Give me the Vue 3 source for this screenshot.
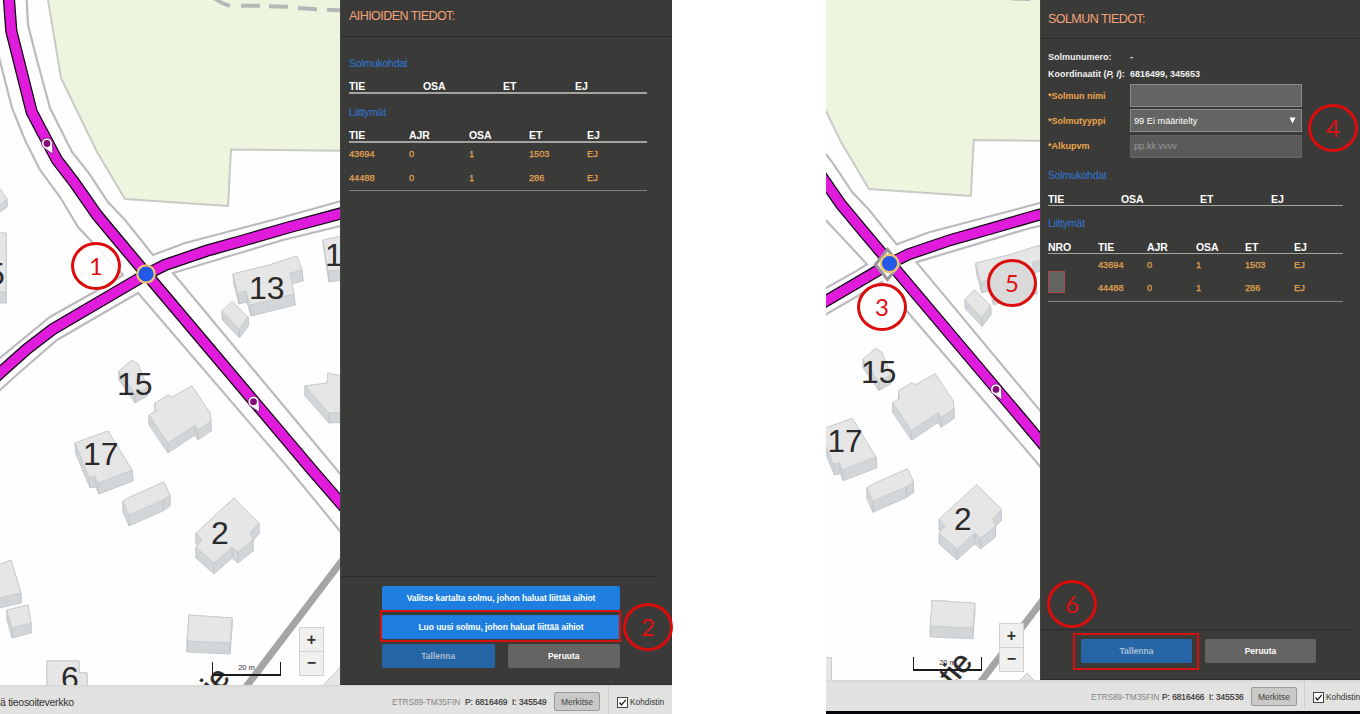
<script setup>
const buildings = [
  { d: [1, 11], p: [[233, 274], [269, 265], [297, 256], [302, 270], [290, 273], [294, 294], [250, 305], [246, 291], [238, 293]] },
  { d: [0.5, 9], p: [[232, 301], [248, 317], [239, 329], [222, 311]] },
  { d: [0, 9], p: [[132, 360], [138, 364], [147, 387], [135, 394], [119, 371]] },
  { d: [0, 10], p: [[192, 386], [210, 413], [211, 421], [198, 430], [195, 425], [168, 443], [149, 415], [156, 411], [155, 403], [168, 395], [172, 397]] },
  { d: [1, 11], p: [[75, 443], [108, 431], [132, 470], [98, 483], [95, 476], [89, 477]] },
  { d: [0, 11], p: [[123, 501], [130, 497], [164, 482], [170, 495], [163, 500], [129, 515]] },
  { d: [0, 11], p: [[234, 498], [259, 523], [250, 533], [253, 540], [238, 552], [232, 547], [214, 563], [196, 547], [202, 540], [196, 533]] },
  { d: [0, 11], p: [[189, 615], [232, 618], [230, 643], [187, 641]] },
  { d: [0, 10], p: [[-15, 570], [11, 560], [21, 593], [-10, 600]] },
  { d: [0, 10], p: [[7, 610], [28, 605], [31, 623], [12, 628]] },
  { d: [0, 0], p: [[47, 661], [79, 661], [79, 673], [87, 673], [87, 700], [47, 700]] },
  { d: [1, 11], p: [[323, 240], [350, 234], [350, 268], [328, 271]] },
  { d: [0, 10], p: [[305, 386], [327, 383], [328, 373], [350, 378], [350, 412], [329, 413]] },
  { d: [0, 11], p: [[-10, 233], [6, 233], [6, 292], [-10, 292]] },
  { d: [0, 8], p: [[-10, 185], [0, 189], [7, 199], [-5, 208]] },
  { d: [0, 0], p: [[322, 687], [345, 662], [345, 700]] },
  { d: [0, 0], p: [[276, 698], [285, 689], [294, 698]] }
]
const pts = a => a.map(q => q.join(',')).join(' ')
const walls = b => b.p.map((a, i) => {
  const c = b.p[(i + 1) % b.p.length]
  const [dx, dy] = b.d
  return pts([a, c, [c[0] + dx, c[1] + dy], [a[0] + dx, a[1] + dy]])
})
const mainRoad = '9,-12 9,0 11.3,31 31.7,112 57,160 74,182 97,215 117,239 146,273.5 312,470 345,508'
const sideRoad = '-12,384 0,373 27,349 53,329 146,274.5 165,265 207,250.7 245,240 290,227 350,211'
const casings = [
  '26.7,-12 26.7,0 28,25 37,60 50,108 72,152 88,172 108,202 125,220 153,255 185,243 280,218 345,200',
  '-3,48 0,61 12,108 25,140 40,170 60,197 78,227 123,275 112,282 50,317 0,358 -5,362',
  '-5,394 0,390 20,372 57,340 100,315 138,293 290,470 345,537',
  '345,225 283,240 233,255 173,273 337,470 345,480'
]
const labels = [
  ['13', 249, 299], ['15', 117, 395], ['17', 83, 464.5], ['2', 211, 544], ['6', 61, 689], ['11', 325, 266], ['5', -13, 285]
]
const pins = [[47, 143.5], [253.5, 401.7]]
const maps = {
  left: { w: 340, h: 685, t: '' },
  right: { w: 214, h: 680, t: 'translate(-80.6 -7.7) scale(.9886)' }
}
const screens = [
  {
    id: 'left', title: 'AIHIOIDEN TIEDOT:', nro: false,
    crs: 'P: 6816469', east: 'I: 345549', footer: 'ä tieosoiteverkko'
  },
  {
    id: 'right', title: 'SOLMUN TIEDOT:', nro: true,
    crs: 'P: 6816466', east: 'I: 345536', footer: ''
  }
]
const rows = [['43694', '0', '1', '1503', 'EJ'], ['44488', '0', '1', '286', 'EJ']]
</script>

<template>
  <div class="page">
    <section v-for="s in screens" :key="s.id" class="screen" :class="s.id">
      <div class="main">
        <div class="map">
          <svg class="canvas" :width="maps[s.id].w" :height="maps[s.id].h">
            <g :transform="maps[s.id].t">
              <polygon class="field" points="47,-14 48,0 61,78 97,152 125,199 228,206 231,149.500 360,151 360,-14" />
              <g class="dashes">
                <path d="M214,-2 L222,3 L230,6" /><path d="M241,5.700H260" /><path d="M269,6.300L288,6.700" /><path d="M298,8L317,9.200" /><path d="M327,9.700L345,10.500" />
              </g>
              <path class="track" d="M350,550 L230,708" />
              <g v-for="(b, i) in buildings" :key="i">
                <polygon v-for="(w, j) in walls(b)" :key="j" class="wall" :points="w" />
                <polygon class="roof" :points="pts(b.p)" />
              </g>
              <polyline v-for="(c, i) in casings" :key="i" class="casing" :points="c" />
              <text class="street" transform="translate(231 678) rotate(-50)" text-anchor="end">tie</text>
              <text v-for="l in labels" :key="l[0]" class="house" :x="l[1]" :y="l[2]">{{ l[0] }}</text>
              <polyline class="edge" :points="sideRoad" />
              <polyline class="edge" :points="mainRoad" />
              <polyline class="road" :points="sideRoad" />
              <polyline class="road" :points="mainRoad" />
              <g v-for="(p, i) in pins" :key="i" :transform="`translate(${p[0]} ${p[1]})`">
                <path class="pin" d="M-5.500,0 A5.500,5.500 0 1 1 5.500,0 L6,10.500 L-2,5.200 A5.500,5.500 0 0 1 -5.500,0Z" />
                <circle class="dot" r="3.400" />
              </g>
            </g>
            <g v-if="s.id === 'left'">
              <circle class="node" cx="146" cy="274" r="8.700" />
            </g>
            <g v-else>
              <path class="diamond" d="M61.500,249.500 L73.500,264.500 L61.500,279.500 L49.500,264.500Z" />
              <circle class="node" cx="63.500" cy="263.500" r="8.700" />
            </g>
          </svg>
          <div class="scale"><span>20 m</span></div>
          <div class="zoom"><b>+</b><b>−</b></div>
        </div>

        <aside class="panel">
          <header class="title"><span>{{ s.title }}</span></header>
          <div class="body">
            <div v-if="s.nro" class="form">
              <div class="info"><label>Solmunumero:</label><span>-</span></div>
              <div class="info"><label>Koordinaatit (<i>P, I</i>):</label><span>6816499, 345653</span></div>
              <div class="field-row"><label>*Solmun nimi</label><div class="input"></div></div>
              <div class="field-row"><label>*Solmutyyppi</label><div class="input select"><span>99 Ei määritelty</span><svg width="7" height="7"><path d="M.5 .5h6L3.500 6.500z" fill="#fff" /></svg></div></div>
              <div class="field-row"><label>*Alkupvm</label><div class="input off"><span>pp.kk.vvvv</span></div></div>
            </div>
            <h3>Solmukohdat</h3>
            <div class="thead points"><span>TIE</span><span>OSA</span><span>ET</span><span>EJ</span></div>
            <h3 class="second">Liittymät</h3>
            <div class="thead cols"><span v-if="s.nro">NRO</span><span>TIE</span><span>AJR</span><span>OSA</span><span>ET</span><span>EJ</span></div>
            <div class="rows">
              <div v-if="s.nro" class="check"></div>
              <div v-for="r in rows" :key="r[0]" class="cols row"><span v-if="s.nro"></span><span v-for="(c, i) in r" :key="i">{{ c }}</span></div>
            </div>
          </div>
          <footer class="actions">
            <button v-if="!s.nro" class="blue wide">Valitse kartalta solmu, johon haluat liittää aihiot</button>
            <button v-if="!s.nro" class="blue wide">Luo uusi solmu, johon haluat liittää aihiot</button>
            <div class="pair"><button class="save">Tallenna</button><button class="cancel">Peruuta</button></div>
          </footer>
        </aside>
      </div>
      <div class="status">
        <span class="layer">{{ s.footer }}</span>
        <span class="crs">ETRS89-TM35FIN</span>
        <span class="coord">{{ s.crs }}&nbsp; {{ s.east }}</span>
        <button class="mark">Merkitse</button>
        <div class="aim">
          <svg width="11" height="11"><rect x=".5" y=".5" width="10" height="10" fill="#fff" stroke="#444" /><path d="M2.500 5.500L4.500 8L8.800 2.800" fill="none" stroke="#222" stroke-width="1.300" /></svg>
          <span>Kohdistin</span>
        </div>
      </div>
    </section>

    <div class="frame f2"></div>
    <div class="frame f6"></div>
    <div v-for="n in 6" :key="n" class="step" :class="'s' + n">{{ n }}</div>
  </div>
</template>

<style scoped>
* { box-sizing: border-box; }
.page { position: relative; width: 1360px; height: 714px; display: grid; grid-template-columns: 672px 534px; column-gap: 154px; background: #fff; overflow: hidden; font-family: "Liberation Sans", Arial, sans-serif; font-size: 9px; }
.screen { display: flex; flex-direction: column; height: 714px; min-width: 0; }
.right { border-bottom: 3px solid #05060b; }
.main { display: flex; height: 685px; flex: none; }
.right .main { height: 680px; }
.map { position: relative; width: 340px; flex: none; overflow: hidden; background: #fefefe; }
.right .map { width: 214px; }
.canvas { display: block; }
.field { fill: #edf5df; stroke: #c9cac6; stroke-width: 2; }
.dashes path { fill: none; stroke: #b5b8b6; stroke-width: 4; }
.track { stroke: #a5a5a5; stroke-width: 7; }
.wall { fill: #d3d6d8; stroke: #c3c6c8; stroke-width: .9; }
.roof { fill: #e6e6e6; stroke: #cccfd0; stroke-width: 1; }
.casing { fill: none; stroke: #bbbbbf; stroke-width: 2.200; }
.edge { fill: none; stroke: #0c0210; stroke-width: 12.200; }
.road { fill: none; stroke: #e01bdb; stroke-width: 9.700; }
.house, .street { font-size: 32px; fill: #2b2929; }
.street { font-size: 31px; stroke: #2b2929; stroke-width: .5; }
.pin { fill: #fff; stroke: #80107a; stroke-width: .8; }
.dot { fill: #850b7c; }
.node { fill: #2359e8; stroke: #efc66f; stroke-width: 2.200; }
.diamond { fill: #fff; stroke: #999; stroke-width: 3; }
.scale { position: absolute; left: 212px; top: 662px; width: 69px; height: 14px; border: 2px solid #1c1c1c; border-width: 0 1px 2px; text-align: center; font-size: 7.500px; line-height: 11px; color: #333; }
.right .scale { left: 87px; top: 657px; }
.zoom { position: absolute; left: 299px; top: 627px; width: 25px; height: 49px; display: flex; flex-direction: column; background: #f0f0ee; border: 1px solid #d0d0d0; }
.right .zoom { left: 173px; top: 623px; }
.zoom b { flex: 1; text-align: center; font-size: 16px; line-height: 23px; color: #333; }
.zoom b + b { border-top: 1px solid #d0d0d0; line-height: 22px; }
.panel { flex: 1; display: flex; flex-direction: column; background: #3a3a38; border-left: 1px solid #444442; border-bottom: 1px solid #2a2a29; }
.title { height: 37px; padding: 9px 0 0 8px; border-bottom: 1px solid #2b2b2a; color: #f6a377; font-size: 12.500px; line-height: 14px; letter-spacing: -.55px; }
.right .title { height: 39px; padding: 12px 0 0 7px; }
.body { flex: 1; width: 306px; padding-left: 8px; }
.right .body { width: 302px; padding-left: 7px; }
h3 { margin: 18px 0 0; height: 16px; line-height: 16px; font-size: 10.500px; font-weight: 400; letter-spacing: -.25px; color: #2e78d8; }
.second { margin-top: 10px; }
.right h3 { margin-top: 1px; }
.right .second { margin-top: 9px; }
.thead { display: grid; margin-top: 7px; height: 16px; line-height: 17px; border-bottom: 2px solid #a3a3a2; color: #fff; font-weight: 700; font-size: 10.500px; letter-spacing: -.1px; }
.right .thead { margin-top: 8px; height: 15px; border-bottom-width: 1px; line-height: 16px; }
.points { grid-template-columns: 74px 80px 72px 1fr; }
.right .points { grid-template-columns: 73px 79px 71px 1fr; }
.cols { display: grid; grid-template-columns: 60px 60px 60px 58px 1fr; }
.right .cols { grid-template-columns: 50px 49px 49px 49px 49px 1fr; }
.rows { position: relative; height: 48px; border-bottom: 1px solid #848482; }
.row { height: 23.500px; line-height: 23px; color: #e3a553; font-size: 9.200px; -webkit-text-stroke: .25px #e3a553; }
.right .row { line-height: 22px; height: 23px; }
.check { position: absolute; left: 0; top: 17px; width: 17px; height: 22px; background: #646462; border: 1px solid #a34c4c; }
.form { padding-top: 10px; height: 127px; font-weight: 700; }
.info { display: flex; height: 17px; line-height: 17px; color: #f0f0f0; }
.info label, .field-row label { width: 82px; flex: none; }
.field-row { display: flex; height: 25.300px; align-items: center; color: #eba54a; }
.input { width: 172px; height: 23px; background: #646463; border: 1px solid #8c8c8a; display: flex; align-items: center; justify-content: space-between; padding: 0 5px 0 3px; color: #fff; font-weight: 400; font-size: 9.200px; }
.off { background: #5a5a58; border-color: #646462; color: #999; }
.actions { width: 316px; height: 108px; border-top: 1px solid #2b2b2a; padding: 9px 0 0 41px; display: flex; flex-direction: column; gap: 5px; }
.right .actions { width: 312px; height: 50px; padding-left: 40px; }
button { font-family: inherit; border: 0; margin: 0; padding: 0; font-weight: 700; font-size: 8.500px; border-radius: 2px; color: #fff; height: 24px; white-space: nowrap; }
.wide { width: 238px; background: #1f7fe0; letter-spacing: -.06px; }
.pair { display: flex; gap: 13px; }
.pair button { width: 112.500px; }
.right .pair button { width: 111px; }
.save { background: #2766a6; color: #a9bed3; }
.cancel { background: #646462; }
.status { flex: 1; display: flex; align-items: center; padding-top: 4px; background: linear-gradient(#d6d6d5, #e2e2e1 3px); white-space: nowrap; color: #333; overflow: hidden; }
.status > * { flex: none; }
.right .status { padding-top: 2px; }
.layer { width: 392px; font-size: 10.500px; letter-spacing: -.3px; }
.right .layer { width: 265px; }
.crs { width: 73px; color: #858585; font-size: 8.300px; letter-spacing: -.04px; }
.right .crs { width: 71px; }
.coord { width: 89px; font-size: 8.300px; -webkit-text-stroke: .2px #333; }
.mark { width: 46px; height: 19px; background: #c9c9c8; border: 1px solid #9a9a99; color: #444; font-weight: 400; font-size: 8.500px; }
.aim { margin-left: 8px; height: 29px; margin-top: -4px; padding: 5px 0 0 8px; border-left: 1px solid #cfcfce; display: flex; align-items: center; gap: 2px; font-size: 8.300px; }
.right .aim { margin-left: 7px; }
.frame { position: absolute; border: 2px solid #d5120f; }
.f2 { left: 380px; top: 610px; width: 241px; height: 32px; }
.f6 { left: 1073px; top: 633px; width: 126px; height: 37px; }
.step { position: absolute; width: 50px; height: 48px; border: 2.500px solid #dc0c0c; border-width: 3px; border-radius: 50%; font-family: Lato, sans-serif; font-size: 24px; line-height: 42px; text-align: center; color: #e11010; }
.s1 { left: 71px; top: 242px; background: rgba(255, 255, 255, .85); }
.s2 { left: 623px; top: 603px; }
.s3 { left: 857px; top: 283px; background: #fff; }
.s4 { left: 1308px; top: 104px; }
.s5 { left: 987px; top: 259px; background: #dadada; }
.s6 { left: 1047px; top: 580px; }
</style>

<style>
body { margin: 0; overflow: hidden; }
</style>
